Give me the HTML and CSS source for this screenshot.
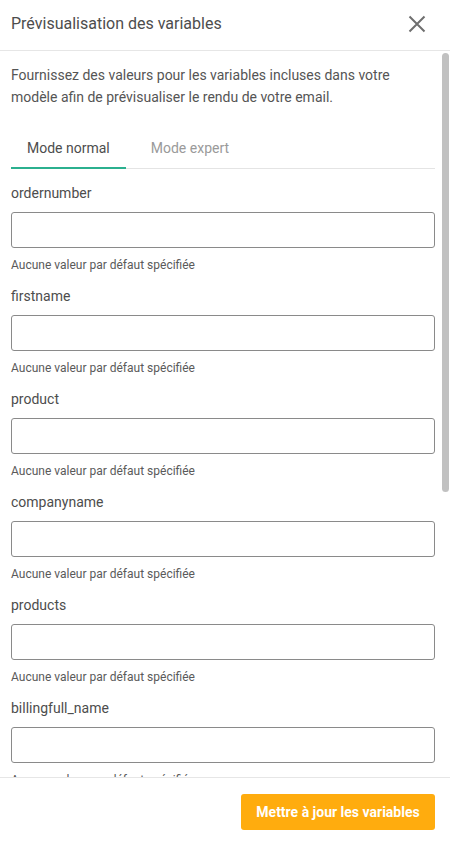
FILE: index.html
```html
<!DOCTYPE html>
<html lang="fr">
<head>
<meta charset="utf-8">
<title>Prévisualisation des variables</title>
<link rel="stylesheet" href="styles.css">
</head>
<body>
<div class="panel">
  <header class="header">
    <h1 class="title">Prévisualisation des variables</h1>
    <button class="close" aria-label="Fermer">
      <svg width="18" height="18" viewBox="0 0 18 18"><path d="M1.5 1.5 L16.5 16.5 M16.5 1.5 L1.5 16.5" stroke="#6f6f6f" stroke-width="2" fill="none"/></svg>
    </button>
  </header>
  <div class="body">
    <div class="scroll">
      <p class="desc">Fournissez des valeurs pour les variables incluses dans votre modèle afin de prévisualiser le rendu de votre email.</p>
      <div class="tabs">
        <div class="tab active">Mode normal</div>
        <div class="tab">Mode expert</div>
      </div>
      <div class="fields">
        <div class="field">
          <label class="label">ordernumber</label>
          <input class="input" type="text">
          <div class="help">Aucune valeur par défaut spécifiée</div>
        </div>
        <div class="field">
          <label class="label">firstname</label>
          <input class="input" type="text">
          <div class="help">Aucune valeur par défaut spécifiée</div>
        </div>
        <div class="field">
          <label class="label">product</label>
          <input class="input" type="text">
          <div class="help">Aucune valeur par défaut spécifiée</div>
        </div>
        <div class="field">
          <label class="label">companyname</label>
          <input class="input" type="text">
          <div class="help">Aucune valeur par défaut spécifiée</div>
        </div>
        <div class="field">
          <label class="label">products</label>
          <input class="input" type="text">
          <div class="help">Aucune valeur par défaut spécifiée</div>
        </div>
        <div class="field">
          <label class="label">billingfull_name</label>
          <input class="input" type="text">
          <div class="help">Aucune valeur par défaut spécifiée</div>
        </div>
      </div>
    </div>
    <div class="scrollbar"><div class="thumb"></div></div>
  </div>
  <footer class="footer">
    <button class="primary">Mettre à jour les variables</button>
  </footer>
</div>
</body>
</html>
```
FILE: styles.css
```css
* { box-sizing: border-box; }
html, body { margin: 0; padding: 0; background: #fff; }
body {
  font-family: Roboto, "Liberation Sans", Arial, sans-serif;
  color: #4a4a4a;
}
.panel {
  width: 450px;
  height: 844px;
  display: flex;
  flex-direction: column;
}
.header {
  height: 51px;
  flex: none;
  display: flex;
  align-items: center;
  justify-content: space-between;
  padding: 0 24px 0 11px;
  border-bottom: 1px solid #e6e6e6;
}
.title {
  margin: 0;
  font-size: 16px;
  font-weight: 400;
  color: #4d4d4d;
  line-height: 20px;
  padding-bottom: 3px;
}
.close {
  border: 0;
  background: none;
  padding: 0;
  width: 18px;
  height: 18px;
  display: flex;
  margin-bottom: 3px;
}
.body {
  flex: 1;
  position: relative;
  overflow: hidden;
}
.scroll {
  height: 100%;
  overflow: hidden;
  padding: 13px 15px 0 11px;
}
.desc {
  margin: 0;
  font-size: 14px;
  line-height: 22px;
  color: #555;
}
.tabs {
  margin-top: 20px;
  display: flex;
  border-bottom: 1px solid #e4e4e4;
}
.tab {
  height: 40px;
  display: flex;
  align-items: center;
  font-size: 14px;
  font-weight: 400;
  color: #9a9a9a;
  padding: 0 25px;
}
.tab.active {
  color: #4d4d4d;
  padding: 0 16px;
  box-shadow: inset 0 -2px 0 #2bb08f;
  margin-bottom: -1px;
  height: 41px;
  padding-bottom: 1px;
}
.fields {
  padding-top: 14px;
  display: flex;
  flex-direction: column;
  gap: 13px;
}
.field {
  display: flex;
  flex-direction: column;
}
.label {
  font-size: 14px;
  line-height: 20px;
  font-weight: 400;
  color: #4d4d4d;
}
.input {
  margin-top: 9px;
  height: 36px;
  width: 100%;
  border: 1px solid #8a8a8a;
  border-radius: 3px;
  font: inherit;
  padding: 0 10px;
  background: #fff;
}
.help {
  margin-top: 9px;
  font-size: 12px;
  line-height: 16px;
  color: #5a5a5a;
}
.scrollbar {
  position: absolute;
  top: 2px;
  right: 1px;
  width: 7px;
  bottom: 0;
}
.thumb {
  height: 439px;
  background: #c1c1c1;
  border-radius: 4px;
}
.footer {
  flex: none;
  height: 67px;
  border-top: 1px solid #e6e6e6;
  display: flex;
  justify-content: flex-end;
  align-items: flex-start;
  padding: 16px 15px 0 0;
}
.primary {
  height: 36px;
  width: 194px;
  border: 0;
  border-radius: 3px;
  background: #ffac0e;
  color: #fff;
  font-family: inherit;
  font-size: 14px;
  font-weight: 700;
  padding: 0;
  white-space: nowrap;
}
```
